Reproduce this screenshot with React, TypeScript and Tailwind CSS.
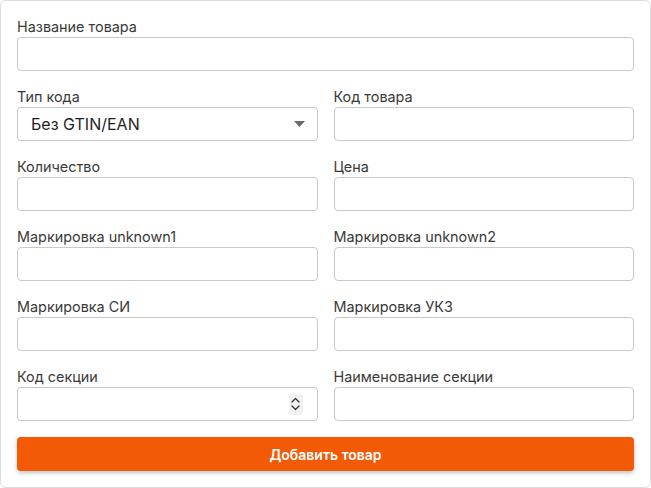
import React from 'react'

function Label({ children }: { children: React.ReactNode }) {
    return <label className="block h-5 text-[14.4px] leading-5 text-[#3a3a3a]">{children}</label>
}

function TextInput() {
    return <div className="h-[34px] rounded-[4px] border border-[#c9c9c9] bg-white" />
}

function Field({ label, children }: { label: string; children?: React.ReactNode }) {
    return (
        <div className="flex flex-col">
            <Label>{label}</Label>
            {children ?? <TextInput />}
        </div>
    )
}

export default function App() {
    return (
        <div className="h-[488px] w-[651px] bg-white" style={{ fontFamily: 'Inter, "Noto Sans", sans-serif' }}>
            <div className="flex h-full w-full flex-col gap-4 rounded-[6px] border border-[#dcdcdc] px-4 pt-4 pb-[15px]">
                <Field label="Название товара" />

                <div className="grid grid-cols-2 gap-x-4 gap-y-4">
                    <Field label="Тип кода">
                        <div className="flex h-[34px] items-center justify-between rounded-[4px] border border-[#c9c9c9] bg-white pr-[12px] pl-[13px]">
                            <span className="text-[16px] text-[#1f1f1f]">Без GTIN/EAN</span>
                            <svg width="11" height="6" viewBox="0 0 11 6">
                                <path d="M0 0H11L5.5 6Z" fill="#6b6b6b" />
                            </svg>
                        </div>
                    </Field>
                    <Field label="Код товара" />
                    <Field label="Количество" />
                    <Field label="Цена" />
                    <Field label="Маркировка unknown1" />
                    <Field label="Маркировка unknown2" />
                    <Field label="Маркировка СИ" />
                    <Field label="Маркировка УКЗ" />
                    <Field label="Код секции">
                        <div className="flex h-[34px] items-center justify-end rounded-[4px] border border-[#c9c9c9] bg-white pr-[14px]">
                            <div className="flex h-[21px] w-[14px] flex-col items-center justify-center gap-[2px] rounded-[3px] bg-[#f1f1f1]">
                                <svg width="9" height="6" viewBox="0 0 9 6">
                                    <path d="M1 5L4.5 1.5L8 5" stroke="#333" strokeWidth="1.3" fill="none" strokeLinecap="round" strokeLinejoin="round" />
                                </svg>
                                <svg width="9" height="6" viewBox="0 0 9 6">
                                    <path d="M1 1L4.5 4.5L8 1" stroke="#333" strokeWidth="1.3" fill="none" strokeLinecap="round" strokeLinejoin="round" />
                                </svg>
                            </div>
                        </div>
                    </Field>
                    <Field label="Наименование секции" />
                </div>

                <button className="h-[34px] w-full rounded-[4px] bg-[#f25a05] text-[14px] font-semibold text-white shadow-[0_2px_4px_rgba(0,0,0,0.25)]">
                    Добавить товар
                </button>
            </div>
        </div>
    )
}
